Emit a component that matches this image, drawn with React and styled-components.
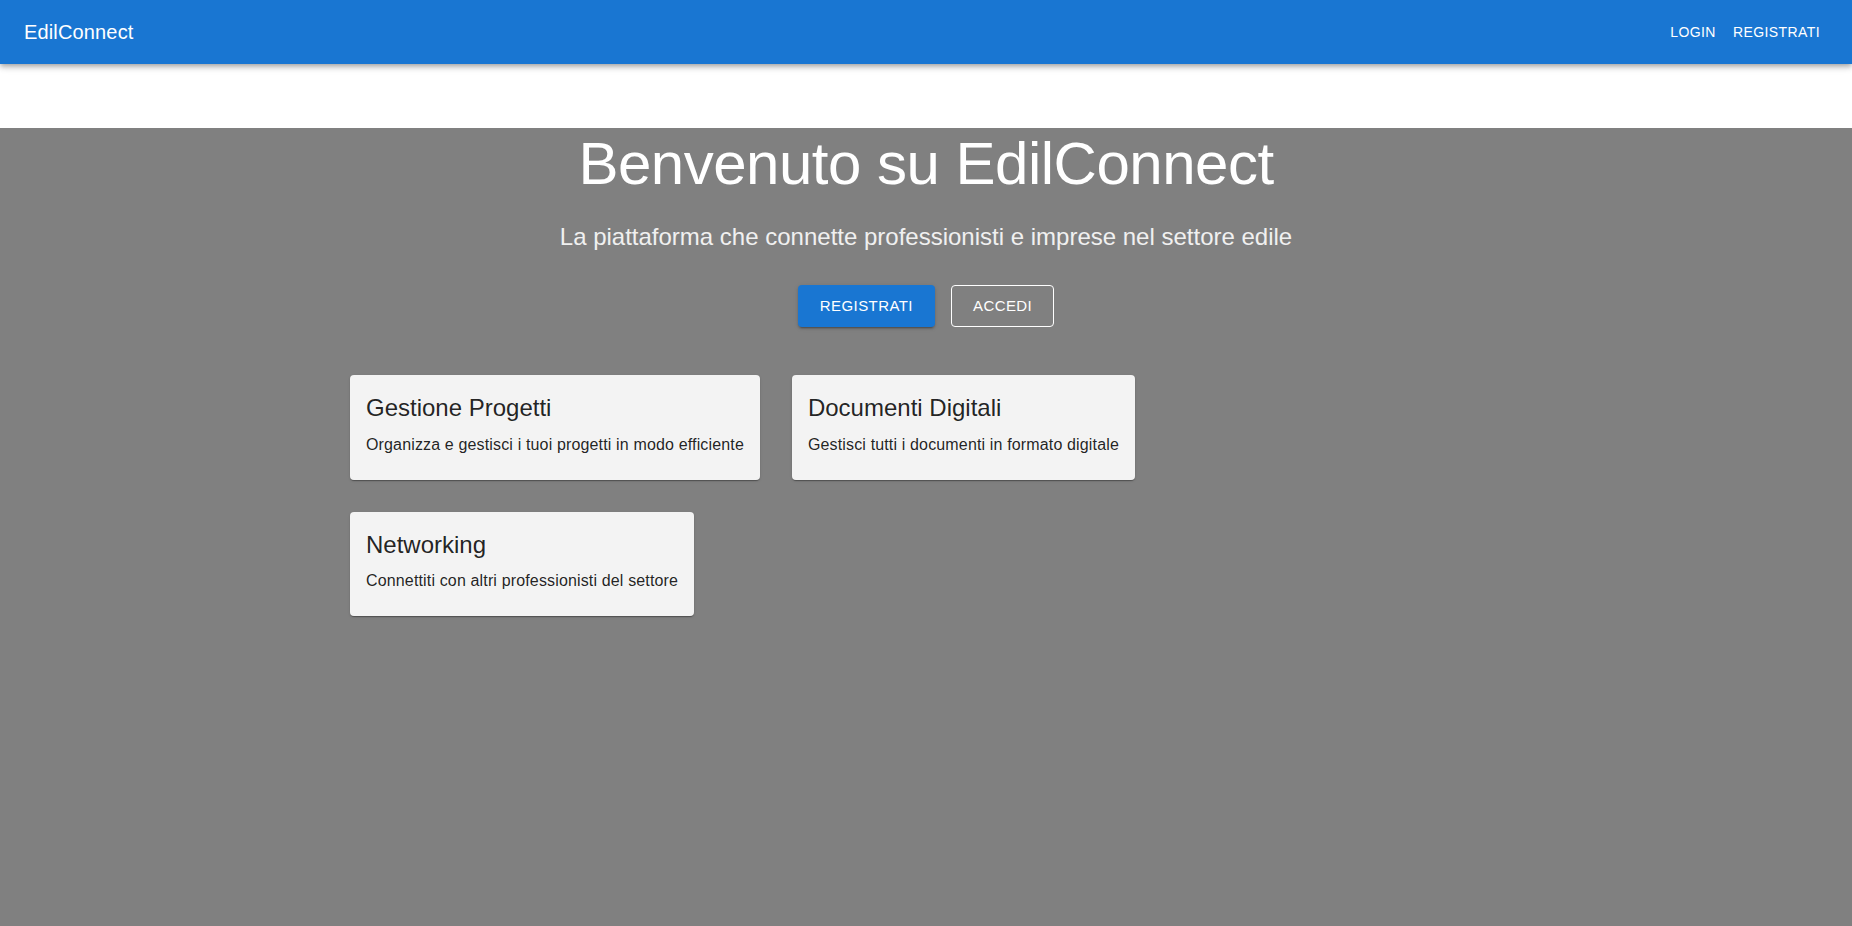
import React from "react";
import styled, { createGlobalStyle } from "styled-components";

const features = [
	{ title: "Gestione Progetti", text: "Organizza e gestisci i tuoi progetti in modo efficiente" },
	{ title: "Documenti Digitali", text: "Gestisci tutti i documenti in formato digitale" },
	{ title: "Networking", text: "Connettiti con altri professionisti del settore" },
];

const App = () => {
	return (
		<Page>
			<GlobalStyle />
			<AppBar>
				<Brand>EdilConnect</Brand>
				<NavButton>Login</NavButton>
				<NavButton>Registrati</NavButton>
			</AppBar>
			<Spacer />
			<Hero>
				<Container>
					<Title>Benvenuto su EdilConnect</Title>
					<Subtitle>La piattaforma che connette professionisti e imprese nel settore edile</Subtitle>
					<Actions>
						<Button variant="contained">Registrati</Button>
						<Button>Accedi</Button>
					</Actions>
					<CardGrid>
						{features.map((f) => (
							<Card key={f.title}>
								<CardTitle>{f.title}</CardTitle>
								<CardText>{f.text}</CardText>
							</Card>
						))}
					</CardGrid>
				</Container>
			</Hero>
		</Page>
	);
};

const GlobalStyle = createGlobalStyle`
	body {
		margin: 0;
		font-family: "Liberation Sans", Arial, sans-serif;
		background: #fff;
	}
	* {
		box-sizing: border-box;
	}
`;

const Page = styled.div`
	min-height: 100vh;
	display: flex;
	flex-direction: column;
`;

const AppBar = styled.header`
	position: relative;
	z-index: 2;
	height: 64px;
	padding: 0 24px;
	display: flex;
	align-items: center;
	background: #1976d2;
	color: #fff;
	box-shadow: 0px 2px 4px -1px rgba(0, 0, 0, 0.2), 0px 4px 5px 0px rgba(0, 0, 0, 0.14),
		0px 1px 10px 0px rgba(0, 0, 0, 0.12);
`;

const Brand = styled.div`
	flex-grow: 1;
	font-size: 20px;
	line-height: 1.6;
	letter-spacing: 0.0075em;
`;

const NavButton = styled.button`
	min-width: 64px;
	padding: 6px 8px;
	border: 0;
	background: none;
	color: #fff;
	font-family: inherit;
	font-size: 14px;
	line-height: 1.75;
	letter-spacing: 0.02857em;
	text-transform: uppercase;
	cursor: pointer;
`;

const Spacer = styled.div`
	height: 64px;
`;

const Hero = styled.section`
	flex: 1;
	background: #808080;
	text-align: center;
`;

const Container = styled.div`
	max-width: 1200px;
	margin: 0 auto;
	padding: 0 24px;
`;

const Title = styled.h1`
	margin: 0 0 21px;
	font-size: 60px;
	font-weight: 400;
	line-height: 1.2;
	letter-spacing: -0.00833em;
	color: #fff;
`;

const Subtitle = styled.p`
	margin: 0 0 32px;
	font-size: 24px;
	line-height: 1.334;
	color: #f0f0f0;
`;

const Actions = styled.div`
	display: flex;
	justify-content: center;
	gap: 16px;
`;

const Button = styled.button`
	min-width: 64px;
	padding: ${({ variant }) => (variant === "contained" ? "8px 22px" : "7px 21px")};
	border: ${({ variant }) => (variant === "contained" ? "0" : "1px solid #fff")};
	border-radius: 4px;
	background: ${({ variant }) => (variant === "contained" ? "#1976d2" : "transparent")};
	color: #fff;
	font-family: inherit;
	font-size: 15px;
	line-height: 1.75;
	letter-spacing: 0.02857em;
	text-transform: uppercase;
	box-shadow: ${({ variant }) =>
		variant === "contained"
			? "0px 3px 1px -2px rgba(0,0,0,0.2), 0px 2px 2px 0px rgba(0,0,0,0.14), 0px 1px 5px 0px rgba(0,0,0,0.12)"
			: "none"};
	cursor: pointer;
`;

const CardGrid = styled.div`
	margin-top: 48px;
	display: flex;
	flex-wrap: wrap;
	gap: 32px;
	text-align: left;
`;

const Card = styled.div`
	padding: 17px 16px 23px;
	border-radius: 4px;
	background: rgba(255, 255, 255, 0.9);
	color: rgba(0, 0, 0, 0.87);
	box-shadow: 0px 2px 1px -1px rgba(0, 0, 0, 0.2), 0px 1px 1px 0px rgba(0, 0, 0, 0.14),
		0px 1px 3px 0px rgba(0, 0, 0, 0.12);
`;

const CardTitle = styled.h2`
	margin: 0 0 8.4px;
	font-size: 24px;
	font-weight: 400;
	line-height: 1.334;
`;

const CardText = styled.p`
	margin: 0;
	font-size: 16px;
	line-height: 1.5;
	letter-spacing: 0.00938em;
`;

export default App;
